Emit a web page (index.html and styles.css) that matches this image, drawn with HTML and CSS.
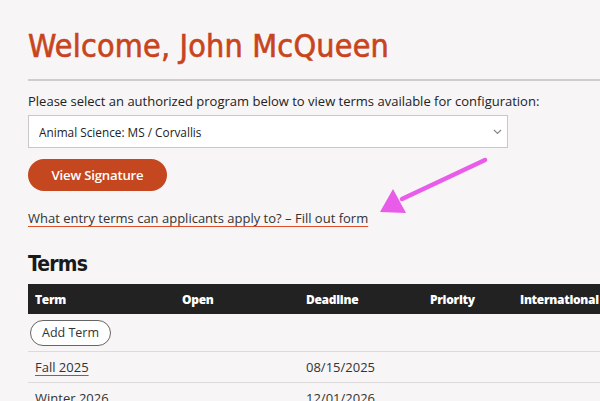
FILE: index.html
```html
<!DOCTYPE html>
<html lang="en">
<head>
    <meta charset="UTF-8">
    <meta name="viewport" content="width=device-width, initial-scale=1.0">
    <title>Program Terms</title>
    <link rel="stylesheet" href="styles.css">
</head>
<body>
    <div class="page">
        <h1 class="welcome">Welcome, John McQueen</h1>
        <hr class="rule">

        <label class="select-label" for="program">Please select an authorized program below to view terms available for configuration:</label>
        <div class="select-wrap">
            <select id="program" class="program-select">
                <option>Animal Science: MS / Corvallis</option>
            </select>
            <svg class="chevron" width="9" height="6" viewBox="0 0 9 6"><path d="M1 1l3.5 3.5L8 1" fill="none" stroke="#888" stroke-width="1.2"/></svg>
        </div>

        <button class="btn-signature">View Signature</button>

        <p class="form-link"><a href="#">What entry terms can applicants apply to? – Fill out form</a></p>

        <h2 class="terms-title">Terms</h2>
        <table class="terms">
            <thead>
                <tr>
                    <th class="col-term">Term</th>
                    <th class="col-open">Open</th>
                    <th class="col-deadline">Deadline</th>
                    <th class="col-priority">Priority</th>
                    <th class="col-intl">International</th>
                </tr>
            </thead>
            <tbody>
                <tr class="add-row">
                    <td colspan="5"><button class="btn-add">Add Term</button></td>
                </tr>
                <tr>
                    <td><a href="#">Fall 2025</a></td>
                    <td></td>
                    <td>08/15/2025</td>
                    <td></td>
                    <td></td>
                </tr>
                <tr>
                    <td><a href="#">Winter 2026</a></td>
                    <td></td>
                    <td>12/01/2026</td>
                    <td></td>
                    <td></td>
                </tr>
            </tbody>
        </table>
    </div>

    <!-- annotation arrow -->
    <svg class="arrow" width="120" height="70" viewBox="0 0 120 70">
        <line x1="105" y1="10" x2="22" y2="49" stroke="#e95ce9" stroke-width="4.5" stroke-linecap="round"/>
        <polygon points="0,62 13,39 26,63" fill="#e95ce9"/>
    </svg>
</body>
</html>
```

FILE: styles.css
```css
body {
    margin: 0;
    background-color: #f7f5f6;
    font-family: "Open Sans", Arial, sans-serif;
    color: #222;
    overflow: hidden;
}
.page {
    padding: 26px 0 0 28px;
}
.welcome {
    font-family: "DejaVu Sans Condensed", "DejaVu Sans", sans-serif;
    font-weight: normal;
    font-size: 32px;
    color: #c7441c;
    -webkit-text-stroke: 0.6px #c7441c;
    margin: 0;
    line-height: 40px;
    letter-spacing: 0.2px;
}
.rule {
    border: none;
    border-top: 2px solid #cfcdce;
    margin: 13px 0 0 0;
}
.select-label {
    display: block;
    font-size: 13px;
    margin-top: 11px;
    color: #222;
}
.select-wrap {
    position: relative;
    width: 480px;
    margin-top: 5px;
}
.program-select {
    width: 480px;
    height: 33px;
    border: 1px solid #c8c8c8;
    background: #fff;
    font-family: "Open Sans", Arial, sans-serif;
    font-size: 11.8px;
    color: #222;
    padding: 0 0 0 10px;
    appearance: none;
    -webkit-appearance: none;
    border-radius: 0;
}
.chevron {
    position: absolute;
    right: 6px;
    top: 14px;
}
.btn-signature {
    display: block;
    margin-top: 11px;
    width: 139px;
    height: 32px;
    border: none;
    border-radius: 16px;
    background-color: #c5471f;
    color: #fff;
    font-family: "Open Sans", Arial, sans-serif;
    font-weight: 600;
    font-size: 13.2px;
    letter-spacing: -0.2px;
}
.form-link {
    margin: 18px 0 0 0;
    font-size: 13px;
    line-height: 19px;
}
.form-link a, .terms a {
    color: #333;
    text-decoration: underline;
    text-decoration-color: #d9502a;
    text-underline-offset: 3px;
}
.terms a {
    text-decoration-color: #d63a3a;
}
.terms-title {
    font-family: "DejaVu Sans Condensed", "DejaVu Sans", sans-serif;
    font-weight: bold;
    font-size: 21px;
    margin: 23px 0 0 0;
    line-height: 26px;
    color: #1a1a1a;
    letter-spacing: -0.8px;
}
.terms {
    margin-top: 7px;
    border-collapse: collapse;
    width: 620px;
    font-size: 13px;
}
.terms th {
    background-color: #222;
    color: #fff;
    text-align: left;
    font-family: "Open Sans", Arial, sans-serif;
    font-weight: 800;
    font-size: 12px;
    letter-spacing: -0.3px;
    height: 30px;
    padding: 0 0 0 7px;
}
.col-term { width: 140px; }
.col-open { width: 117px; }
.col-deadline { width: 117px; }
.col-priority { width: 83px; }
.terms td {
    height: 30px;
    padding: 0 0 0 7px;
    border-bottom: 1px solid #dcdadb;
    color: #333;
}
.add-row td {
    height: 37px;
    padding: 0 0 0 2px;
}
.btn-add {
    height: 26px;
    padding: 0 11px;
    border: 1px solid #666;
    border-radius: 13px;
    background: #fff;
    font-family: "Open Sans", Arial, sans-serif;
    font-size: 12.5px;
    color: #333;
}
.arrow {
    position: absolute;
    left: 380px;
    top: 150px;
}
```
